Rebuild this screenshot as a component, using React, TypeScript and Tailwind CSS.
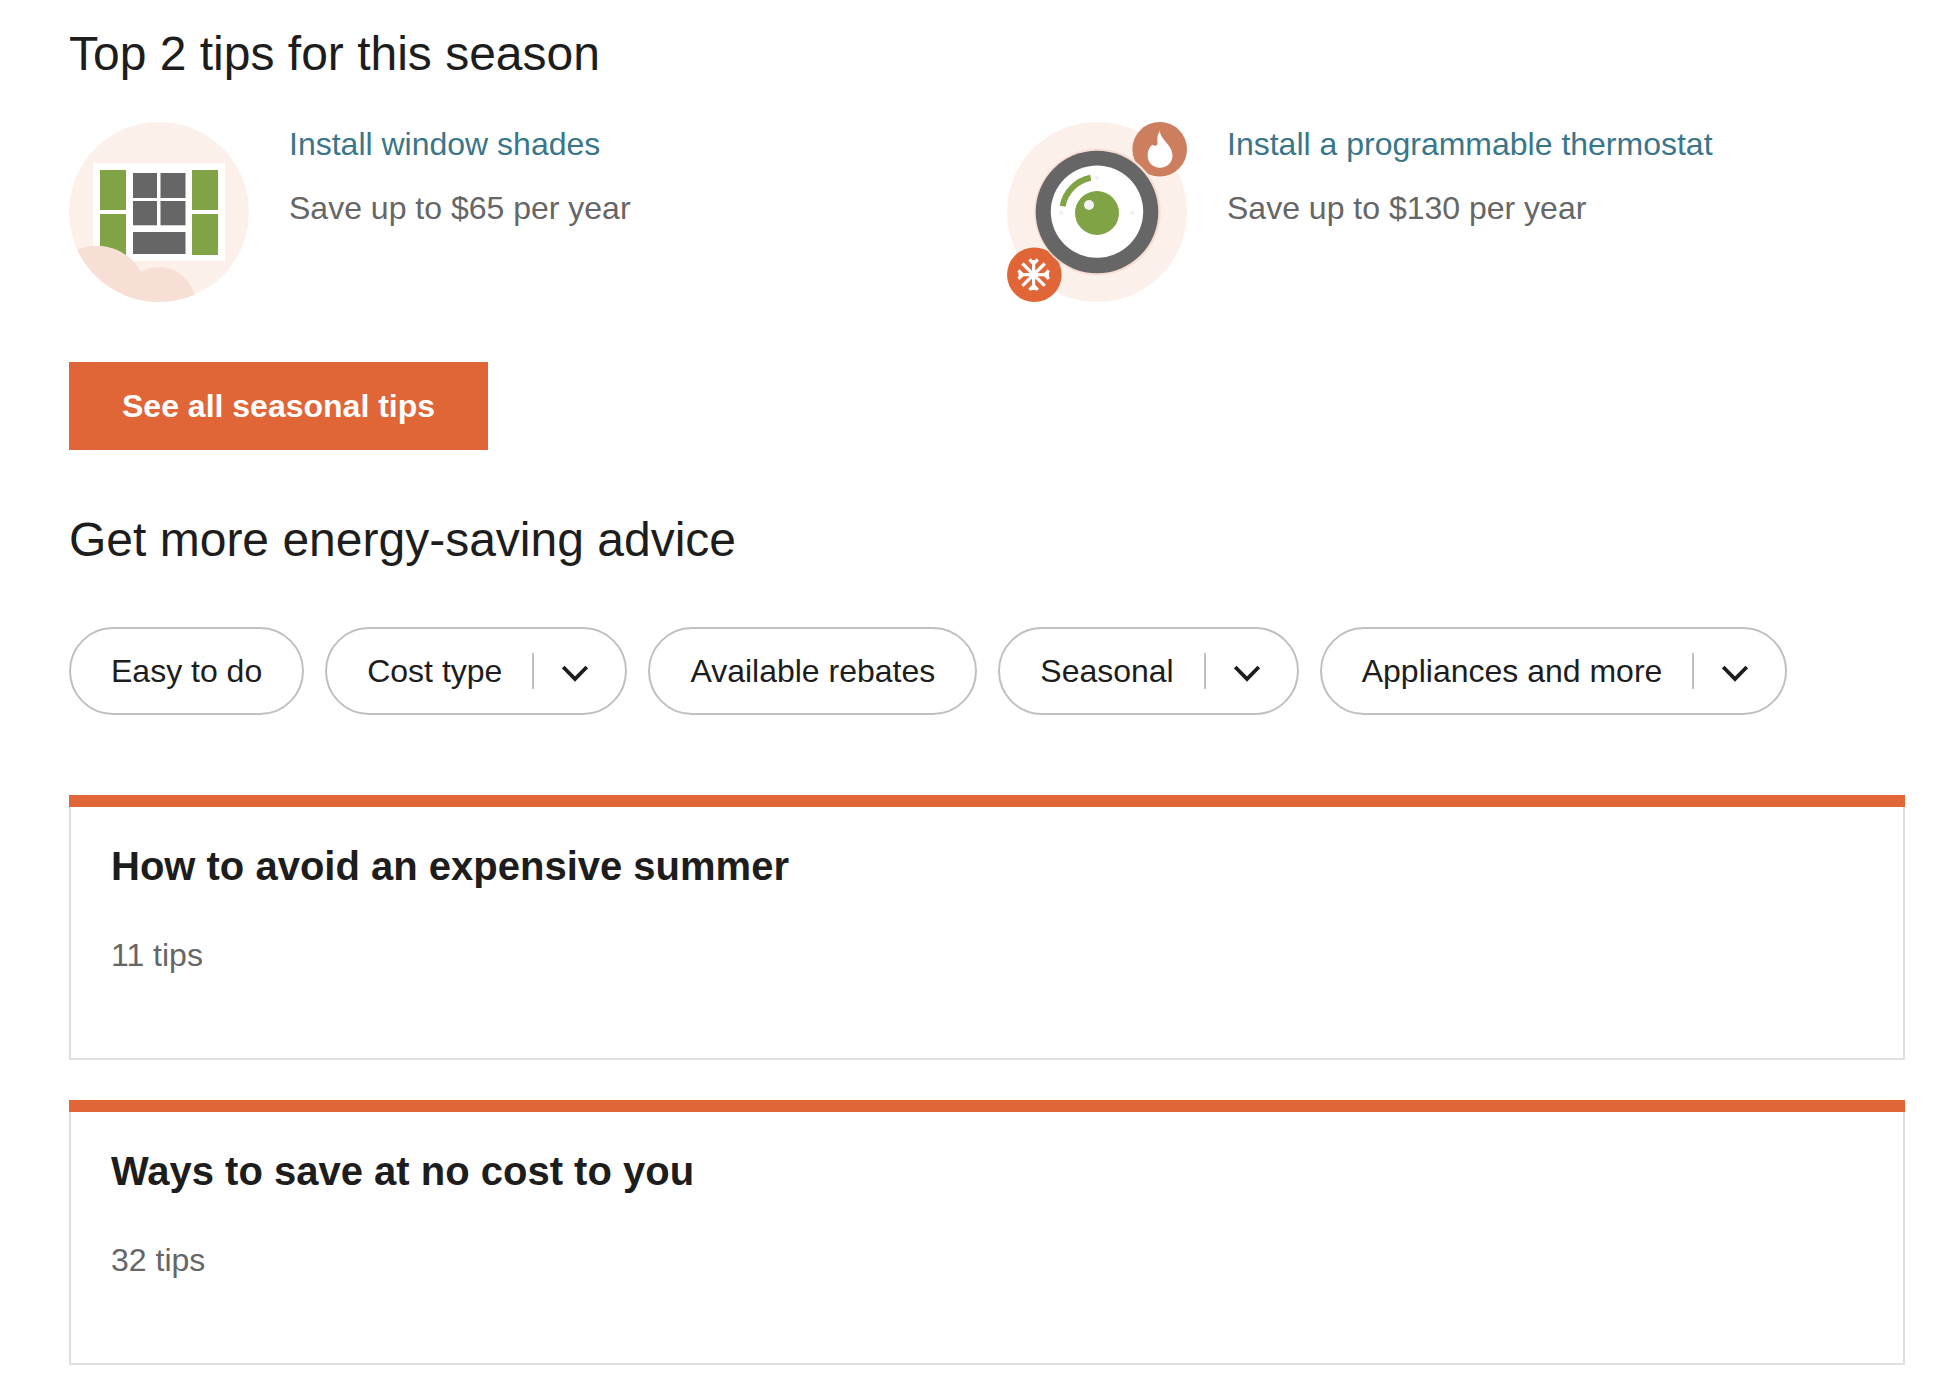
import React from "react";

function WindowShadesArt() {
  return (
    <svg viewBox="0 0 180 180" className="size-45 shrink-0" aria-hidden="true">
      <defs>
        <clipPath id="window-disc">
          <circle cx="90" cy="90" r="90" />
        </clipPath>
      </defs>
      <circle cx="90" cy="90" r="90" fill="#fbf0ea" />
      <rect x="24" y="41" width="132" height="98" fill="#fff" />
      <g fill="#7fa345">
        <rect x="31" y="48" width="26" height="40" />
        <rect x="31" y="92" width="26" height="41" />
        <rect x="123" y="48" width="26" height="40" />
        <rect x="123" y="92" width="26" height="41" />
      </g>
      <g fill="#666">
        <rect x="64" y="51" width="24" height="25" />
        <rect x="91.5" y="51" width="25" height="25" />
        <rect x="64" y="79" width="24" height="24.3" />
        <rect x="91.5" y="79" width="25" height="24.3" />
        <rect x="64" y="110" width="52.5" height="22" />
      </g>
      <g fill="#f7dfd6" clipPath="url(#window-disc)">
        <circle cx="27.7" cy="174.4" r="50.7" />
        <circle cx="90" cy="181.6" r="36.6" />
      </g>
    </svg>
  );
}

function ThermostatArt() {
  return (
    <svg viewBox="0 0 180 180" className="size-45 shrink-0" aria-hidden="true">
      <circle cx="90" cy="90" r="90" fill="#fbf0ea" />
      <circle cx="152.7" cy="27.3" r="27.3" fill="#cd7e5e" />
      <circle cx="27.3" cy="152.7" r="27.3" fill="#e06637" />
      <circle cx="90.5" cy="90" r="63.2" fill="#f8ddd3" />
      <circle cx="90" cy="90" r="61.3" fill="#666" />
      <circle cx="90" cy="89.6" r="46.2" fill="#fff" />
      <g fill="#f0f0f0">
        <circle cx="90" cy="55.7" r="2" />
        <circle cx="54.3" cy="90.7" r="2" />
        <circle cx="125.3" cy="90.7" r="2" />
      </g>
      <path d="M55.6 84.2A35.5 35.5 0 0 1 83.7 55.8" fill="none" stroke="#7fa345" strokeWidth="6" />
      <circle cx="90" cy="91" r="22" fill="#7fa345" />
      <circle cx="82" cy="83" r="5" fill="#f2f2f2" />
      <path
        d="M152.7 9C153.8 18 165.5 23 165.5 33.5C165.5 40.5 160 45.7 153 45.7C146 45.7 140.6 40.5 140.6 33.5C140.6 28.5 142.8 24.8 145.6 22.8C147 24 149.6 24.2 150.4 22.4C151.2 20 148.6 16 152.7 9Z"
        fill="#fff"
      />
      <g fill="none" stroke="#fff" strokeWidth="3.2">
        <path d="M26.6 138V168M11.500 152.700H42M15.400 141.500L37.800 163.900M37.800 141.500L15.400 163.900" />
        <path d="M22.400 137.500L26.600 141.700L30.800 137.500M22.400 167.900L26.600 163.700L30.800 167.900M11.400 148.500L15.600 152.700L11.400 156.900M41.900 148.500L37.700 152.700L41.900 156.900" />
      </g>
    </svg>
  );
}

function Tip({ art, title, saving }: { art: React.ReactNode; title: string; saving: string }) {
  return (
    <li className="flex gap-10">
      {art}
      <div>
        <a href="#tip" className="block text-[32px] leading-11 text-[#3a7689]">
          {title}
        </a>
        <p className="mt-5 text-[32px] leading-11 text-[#666]">{saving}</p>
      </div>
    </li>
  );
}

function Filter({ label }: { label: string }) {
  return (
    <button
      type="button"
      className="flex h-22 items-center rounded-full border-2 border-[#c0c0c0] px-10 text-[32px] leading-11 whitespace-nowrap"
    >
      {label}
    </button>
  );
}

function MenuFilter({ label }: { label: string }) {
  return (
    <button
      type="button"
      aria-haspopup="menu"
      className="flex h-22 items-center rounded-full border-2 border-[#c0c0c0] pr-9 pl-10 text-[32px] leading-11 whitespace-nowrap"
    >
      {label}
      <span className="ml-[30px] h-9 w-0.5 bg-[#c0c0c0]" />
      <svg viewBox="0 0 28 18" className="mt-1 ml-[27px] h-[18px] w-7" aria-hidden="true">
        <path d="M2.200 3L14 15L25.800 3" fill="none" stroke="#1d1d1d" strokeWidth="3.800" />
      </svg>
    </button>
  );
}

function AdviceCard({ title, count }: { title: string; count: number }) {
  return (
    <article>
      <div className="h-3 bg-[#e06637]" />
      <div className="border-2 border-t-0 border-[#e0e0e0] px-10 pt-8 pb-[81px]">
        <h3 className="text-[40px] leading-[54px] font-bold">{title}</h3>
        <p className="mt-10 text-[32px] leading-11 text-[#666]">{count} tips</p>
      </div>
    </article>
  );
}

export default function App() {
  return (
    <main className="bg-white pt-6 pr-[41px] pb-[23px] pl-[69px] font-['Liberation_Sans',Arial,sans-serif] text-[#1d1d1d]">
      <section>
        <h2 className="text-[48px] leading-15">Top 2 tips for this season</h2>
        <ul className="mt-[38px] grid grid-cols-2 gap-10">
          <Tip art={<WindowShadesArt />} title="Install window shades" saving="Save up to $65 per year" />
          <Tip art={<ThermostatArt />} title="Install a programmable thermostat" saving="Save up to $130 per year" />
        </ul>
        <button
          type="button"
          className="mt-15 h-22 bg-[#e06637] px-[53px] text-[32px] leading-11 font-bold text-white"
        >
          See all seasonal tips
        </button>
      </section>
      <section>
        <h2 className="mt-15 text-[48px] leading-15">Get more energy-saving advice</h2>
        <div className="mt-[57px] flex flex-wrap gap-x-[21px] gap-y-5">
          <Filter label="Easy to do" />
          <MenuFilter label="Cost type" />
          <Filter label="Available rebates" />
          <MenuFilter label="Seasonal" />
          <MenuFilter label="Appliances and more" />
        </div>
        <div className="mt-20 flex flex-col gap-10">
          <AdviceCard title="How to avoid an expensive summer" count={11} />
          <AdviceCard title="Ways to save at no cost to you" count={32} />
        </div>
      </section>
    </main>
  );
}
